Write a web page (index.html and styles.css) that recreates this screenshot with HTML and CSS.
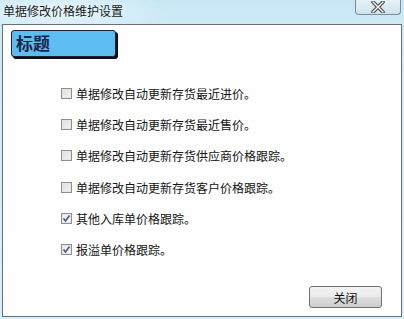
FILE: index.html
```html
<!DOCTYPE html>
<html lang="zh-CN">
<head>
<meta charset="utf-8">
<link rel="stylesheet" href="styles.css">
</head>
<body>
<div class="window">
  <div class="titlebar">
    <span class="title">单据修改价格维护设置</span>
    <button class="close-x" aria-label="关闭">
      <svg width="16" height="12" viewBox="0 0 16 12">
        <path d="M3 1 L13 11 M13 1 L3 11" stroke="#4a4a4a" stroke-width="3.6" stroke-linecap="round"/>
        <path d="M3 1 L13 11 M13 1 L3 11" stroke="#ffffff" stroke-width="1.4" stroke-linecap="round"/>
      </svg>
    </button>
  </div>
  <div class="client">
    <div class="heading">标题</div>
    <div class="options">
      <label class="opt"><span class="cb"></span>单据修改自动更新存货最近进价。</label>
      <label class="opt"><span class="cb"></span>单据修改自动更新存货最近售价。</label>
      <label class="opt"><span class="cb"></span>单据修改自动更新存货供应商价格跟踪。</label>
      <label class="opt"><span class="cb"></span>单据修改自动更新存货客户价格跟踪。</label>
      <label class="opt"><span class="cb checked"><svg width="9" height="9" viewBox="0 0 9 9"><path d="M1.5 4.5 L3.5 7 L7.5 1.5" fill="none" stroke="#4a5a78" stroke-width="1.6"/></svg></span>其他入库单价格跟踪。</label>
      <label class="opt"><span class="cb checked"><svg width="9" height="9" viewBox="0 0 9 9"><path d="M1.5 4.5 L3.5 7 L7.5 1.5" fill="none" stroke="#4a5a78" stroke-width="1.6"/></svg></span>报溢单价格跟踪。</label>
    </div>
    <div class="footer">
      <button class="btn">关闭</button>
    </div>
  </div>
</div>
</body>
</html>
```
FILE: styles.css
```css
* { box-sizing: border-box; }
html, body {
  margin: 0;
  padding: 0;
  width: 404px;
  height: 319px;
  overflow: hidden;
}
body {
  font-family: "Noto Sans CJK SC", "Noto Sans", sans-serif;
  background: #d6eef8;
}
.window {
  display: flex;
  flex-direction: column;
  width: 404px;
  height: 319px;
  background: linear-gradient(180deg, #cde9f6 0%, #d8f0fa 100%);
}
.titlebar {
  height: 24px;
  display: flex;
  align-items: flex-start;
  justify-content: space-between;
  background: radial-gradient(ellipse 110px 20px at 60px 11px, #eaf6fb 0%, rgba(234,246,251,0) 100%), linear-gradient(180deg, #c8e7f5 0%, #cfeaf7 100%);
}
.title {
  font-size: 12px;
  line-height: 22px;
  color: #1b1b1b;
  padding-left: 3px;
}
.close-x {
  width: 46px;
  height: 15px;
  margin-right: 3px;
  padding: 0;
  border: 1px solid #7d8c96;
  border-top: none;
  border-radius: 0 0 4px 4px;
  background: linear-gradient(180deg, #e4f1f7 0%, #cfe3ec 100%);
  display: flex;
  align-items: center;
  justify-content: center;
}
.client {
  flex: 1;
  margin: 0 2px 2px 2px;
  border: 1px solid #6b6f72;
  background: #fefefe;
  display: flex;
  flex-direction: column;
  padding: 5px 19px 8px 8px;
}
.heading {
  width: 105px;
  height: 27px;
  border: 1px solid #1c2230;
  border-radius: 3px;
  background: #5dbdf0;
  box-shadow: 2px 2px 0 #0d0f14;
  font-size: 17px;
  font-weight: bold;
  color: #1a2548;
  line-height: 24px;
  padding-left: 4px;
}
.options {
  display: flex;
  flex-direction: column;
  padding-left: 50px;
  margin-top: 26px;
  gap: 11.4px;
}
.opt {
  height: 20px;
  display: flex;
  align-items: center;
  font-size: 12px;
  color: #151515;
  gap: 4px;
}
.cb {
  width: 11px;
  height: 11px;
  border: 1px solid #8f8f8f;
  background: linear-gradient(135deg, #dcdcdc 0%, #f4f4f4 100%);
  box-shadow: inset 0 0 0 1px #e6e6e6;
  display: flex;
  align-items: center;
  justify-content: center;
}
.cb.checked {
  background: linear-gradient(135deg, #e4e8ee 0%, #f8f9fb 100%);
}
.footer {
  margin-top: auto;
  display: flex;
  justify-content: flex-end;
}
.btn {
  width: 73px;
  height: 22px;
  border: 1px solid #707070;
  border-radius: 3px;
  background: linear-gradient(180deg, #f2f2f2 0%, #ebebeb 50%, #dddddd 51%, #cfcfcf 100%);
  font-family: "Noto Sans CJK SC", sans-serif;
  font-size: 12px;
  color: #111;
  padding: 0;
}
```
